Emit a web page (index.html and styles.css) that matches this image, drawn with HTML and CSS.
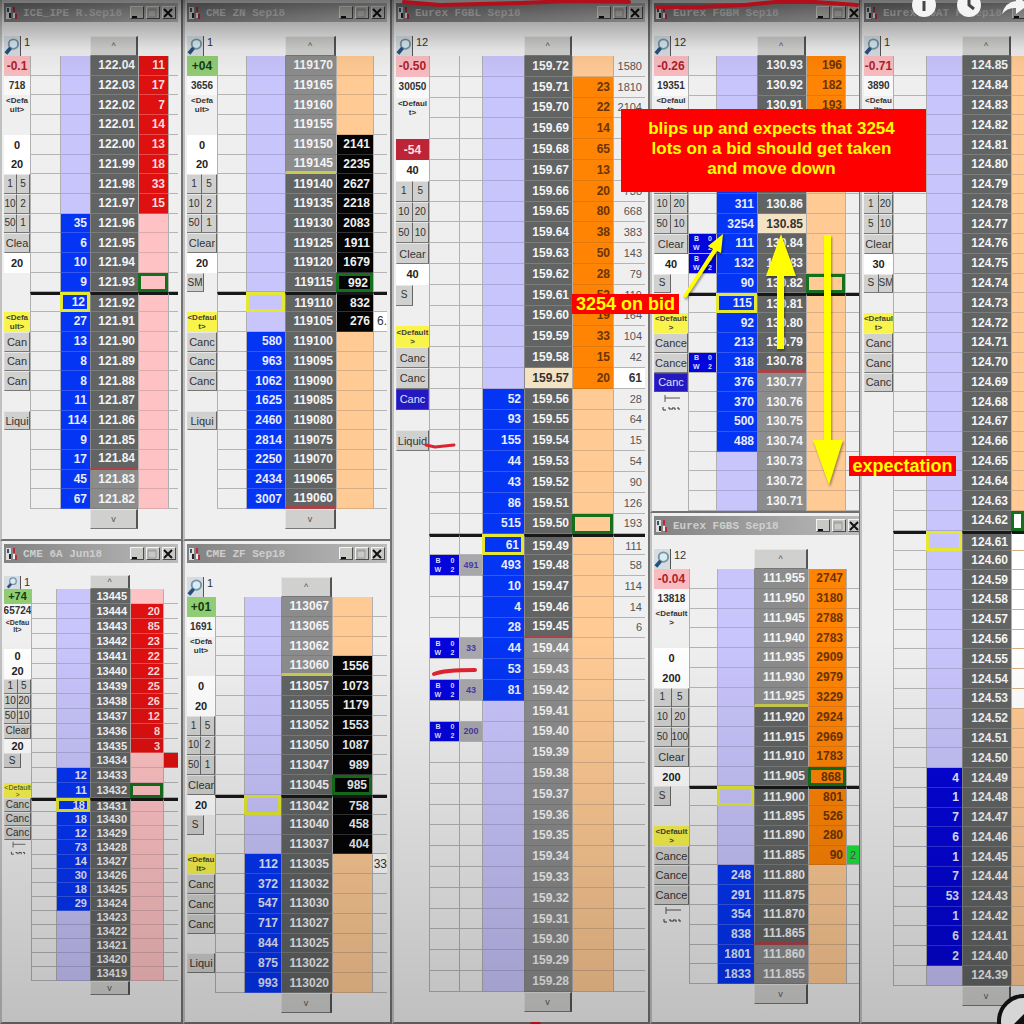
FILE: index.html
```html
<!DOCTYPE html>
<html lang="en">
<head>
    <meta charset="UTF-8">
    <meta name="viewport" content="width=device-width, initial-scale=1.0">
    <title>Price Ladders</title>
    <link rel="stylesheet" href="styles.css">
</head>
<body>

    <main class="desktop">
        <div class="column" id="col-1"></div>
        <div class="column" id="col-2"></div>
        <div class="column column-single" id="col-3"></div>
        <div class="column column-half" id="col-4"></div>
        <div class="column column-single" id="col-5"></div>
    </main>

    <div class="shade"></div>

    <!-- Marker pen and arrows -->
    <svg class="drawings" width="1024" height="1024" viewBox="0 0 1024 1024" xmlns="http://www.w3.org/2000/svg">
        <g fill="none" stroke="#b0101c" stroke-width="4" stroke-linecap="round" stroke-linejoin="round">
            <path d="M404 2 L440 5 L520 3 L570 1 L629 2"/>
            <path d="M657 7 L700 7 L745 5 L775 2 L815 2 L857 5"/>
            <path d="M426 445 L435 447 L454 445" stroke="#dc2430" stroke-width="3"/>
            <path d="M434 674 Q444 670 475 670" stroke="#dc2430"/>
            <path d="M532 1024 H539"/>
        </g>
        <g class="arrows">
            <path d="M683 296 L713 249 L708 246 L723 234 L721 253 L717 251 L686 298 Z"/>
            <path d="M777 349 V276 H766 L781 234 L796 276 H784 V349 Z"/>
            <path d="M824 235 H831 V440 H843 L829 485 L813 440 H824 Z"/>
        </g>
        <circle cx="1024" cy="1021" r="25" fill="#d6d6d6" stroke="#111" stroke-width="4"/>
        <path d="M1014 1024 L1024 1014 V1024 Z" fill="#111"/>
    </svg>

    <p class="callout callout-main">blips up and expects that 3254<br>lots on a bid should get taken<br>and move down</p>
    <p class="callout callout-bid">3254 on bid</p>
    <p class="callout callout-target">expectation</p>

    <div class="player-buttons">
        <button type="button" aria-label="Info">
            <svg viewBox="0 0 24 24"><circle cx="12" cy="12" r="12" fill="#f4f4f4"/><path d="M12 8 V18" stroke="#444" stroke-width="3"/></svg>
        </button>
        <button type="button" aria-label="Watch later">
            <svg viewBox="0 0 24 24"><circle cx="12" cy="12" r="12" fill="#f4f4f4"/><path d="M12 5 V12 L17 16" fill="none" stroke="#444" stroke-width="3"/></svg>
        </button>
        <button type="button" aria-label="Share">
            <svg viewBox="0 0 24 24"><path d="M0 21 Q3 9 14 8 V2 L26 12 L14 21 V15 Q6 14 0 21 Z" fill="#f4f4f4"/></svg>
        </button>
    </div>

    <script src="ladders.js"></script>
</body>
</html>
```

FILE: styles.css
```css
* {
    box-sizing: border-box;
}
body {
    margin: 0;
    overflow: hidden;
    font-family: "Liberation Sans", Arial, sans-serif;
    font-size: 12px;
    background: #e4e4e4;
}
button, input {
    font: inherit;
    margin: 0;
    padding: 0;
    min-width: 0;
    border-radius: 0;
}

/* --- Layout --- */
.desktop {
    display: grid;
    grid-template-columns: 183fr 209fr 258fr 210fr 164fr;
    height: 100vh;
    min-height: 960px;
}
.column {
    display: grid;
    grid-template-rows: 541fr 483fr;
    min-width: 0;
}
.column-single {
    grid-template-rows: 1fr;
}
.column-half {
    grid-template-rows: 513fr 511fr;
}

/* --- Window --- */
.window {
    display: flex;
    flex-direction: column;
    min-width: 0;
    min-height: 0;
    padding: 3px 3px 0 2px;
    border: 2px solid #727272;
    border-top: 0;
    border-left-color: #c0c0c0;
    background: #efefef;
    overflow: hidden;
}
.window-flush {
    padding-right: 0;
    border-right-width: 1px;
}
.window-cut {
    padding-right: 0;
    border-right: 0;
}
.title-bar {
    display: flex;
    align-items: center;
    height: 19px;
    flex: none;
    padding: 0 2px;
    background: linear-gradient(to right, #828282, #bcbcbc);
}
/* these two run past the edge of the view */
.window-flush .title-bar {
    width: 210px;
}
.window-cut .title-bar {
    width: 196px;
}
.title-bar svg {
    width: 12px;
    height: 14px;
    flex: none;
    margin-right: 5px;
}
.title-bar h2 {
    flex: 1;
    min-width: 0;
    margin: 0;
    overflow: hidden;
    white-space: nowrap;
    font: bold 11px "Liberation Mono", monospace;
    color: #cecece;
}
.title-bar button {
    width: 14px;
    height: 13px;
    flex: none;
    margin-left: 2px;
    border: 1px solid;
    border-color: #f4f4f4 #4c4c4c #4c4c4c #f4f4f4;
    background: #c8c8c4;
}
.title-bar button svg {
    display: block;
    width: 10px;
    height: 10px;
    margin: 0;
}
.toolbar, .footer {
    display: grid;
    flex: none;
}
.toolbar {
    height: 34px;
    align-items: end;
}
.toolbar-short {
    height: 26px;
}
.zoom {
    display: flex;
    gap: 3px;
    white-space: nowrap;
    font-size: 11px;
    color: #333;
}
.zoom button {
    width: 17px;
    height: 20px;
    flex: none;
    border: 0;
    border-right: 1px solid #555;
    background: #d5dde2;
}
.toolbar-short .zoom button {
    height: 13px;
}
.zoom svg {
    display: block;
    width: 100%;
    height: 100%;
}
.scroll {
    height: 20px;
    border: 1px solid;
    border-color: #e4e4e4 #555 #777 #e4e4e4;
    border-right-width: 2px;
    background: #d0d0ce;
    color: #555;
    font-size: 9px;
    line-height: 12px;
}
.toolbar-short .scroll, .ladder-small + .footer .scroll {
    height: 14px;
}

/* --- Ladder --- */
.ladder {
    display: flex;
    flex: 1;
    min-height: 0;
}
.ladder tbody {
    display: flex;
    flex-direction: column;
    flex: 1;
    min-width: 0;
}
.ladder tr {
    display: grid;
    flex: 1 1 0;
    min-height: 0;
}
.ladder td {
    display: flex;
    align-items: center;
    justify-content: flex-end;
    min-width: 0;
    min-height: 0;
    padding: 0 3px 0 0;
    overflow: hidden;
    white-space: nowrap;
    font-weight: bold;
    line-height: 14px;
    border-bottom: 1px solid #b4b4b4;
    border-left: 1px solid #b0b0b0;
}
.ladder-small td {
    font-size: 11px;
    line-height: 12px;
}
.ladder .bid { background: #c8c4fc; border-bottom-color: #aaa8d8; }
.ladder .ask { background: #ffca94; border-bottom-color: #d8ae84; }
.ladder .ask-pink { background: #ffc2c4; border-bottom-color: #dcaaac; }
.ladder .ask-white { background: #fff; }
.ladder .price { background: #626464; color: #f4f4f4; border-bottom-color: #7c7e7e; border-left-color: #888; }
.ladder .price-light { background: #8c8c8c; }
.ladder .price-last { background: #f4e2c4; color: #333; }
.ladder .high { border-bottom: 3px solid #c8cc50; }
.ladder .low { border-bottom: 3px solid #a84448; }
.ladder .fill-blue { background: #0434f4; color: #e8ecff; border-bottom-color: #3458f0; }
.ladder .fill-navy { background: #0404d8; color: #e8ecff; border-bottom-color: #3434e0; }
.ladder .fill-red { background: #de1010; color: #ffd8d8; border-bottom-color: #e84c4c; }
.ladder .fill-black { background: #040404; color: #f0f0f0; border-bottom-color: #333; }
.ladder .fill-orange { background: #ff8404; color: #6a3404; border-bottom-color: #e07810; }
.ladder .fill-green { background: #1ce43c; color: #234; }
.ladder .mid td + td { border-top: 3px solid #181818; }
.ladder .mid td.best-bid, .ladder td.best-bid {
    border: 3px solid #e4e834;
    padding-right: 2px;
}
.ladder td.best-ask {
    border: 3px solid #14701c;
    padding-right: 2px;
}
.ladder .volume {
    font-weight: normal;
    font-size: 11px;
    color: #555;
}
.ladder .volume-last {
    background: #fff;
    font-weight: bold;
    font-size: 12px;
    color: #333;
}
.ladder .volume-cut {
    background: #fff;
    font-size: 12px;
    color: #333;
    padding: 0;
}
.ladder .order {
    justify-content: space-around;
    padding: 0;
    background: #0404dc;
    color: #dcdcff;
    font-size: 7px;
    line-height: 9px;
    text-align: center;
    white-space: pre;
}
.ladder .order-size {
    justify-content: center;
    padding: 0;
    background: #a8a8ac;
    color: #4838a8;
    font-size: 9px;
}

/* --- Side controls, first cell of each row --- */
.ladder .side {
    justify-content: center;
    padding: 0;
    border: 0;
    color: #333;
}
.side input {
    width: 100%;
    height: 100%;
    border: 0;
    background: #fff;
    color: #222;
    text-align: center;
    font-size: 11px;
    font-weight: bold;
}
.side button {
    flex: 1;
    height: 100%;
    padding: 0;
    overflow: hidden;
    border: 1px solid;
    border-color: #e8e8e8 #666 #777 #d8d8d8;
    background: #d0d0ce;
    color: #333;
    font-size: 11px;
    font-weight: normal;
    line-height: 12px;
}
.side .pair {
    border-left: 0;
    font-size: 10px;
}
.ladder-small .side button {
    font-size: 10px;
}
.side .narrow {
    flex: none;
    width: 17px;
    margin-right: auto;
    border-left: 0;
    font-size: 10px;
}
.side .sent {
    background: #2418c0;
    border-color: #4840d0;
    color: #e0e0ff;
}
.ladder .up { background: #90cc74; color: #143c14; }
.ladder .down { background: #f8bcc0; color: #b01c2c; }
.ladder .position { background: #bc2438; color: #ffe0e0; }
.ladder .total { background: #f8f8f8; font-size: 10px; }
.ladder .account, .ladder .account-set {
    font-size: 8px;
    line-height: 9px;
    text-align: center;
    white-space: pre;
}
.ladder-small .account, .ladder-small .account-set {
    font-size: 7px;
    line-height: 7px;
}
.ladder-small .account-set {
    font-weight: normal;
}
.ladder .account-set { background: #f8f44c; color: #443; }
.side svg {
    width: 18px;
    height: 17px;
}
.ladder-small .side svg {
    height: 14px;
}

/* --- Overlays --- */
.shade {
    position: absolute;
    inset: 0;
    pointer-events: none;
    background: linear-gradient(to bottom, rgba(0, 0, 0, .52), rgba(0, 0, 0, .35) 15px, rgba(0, 0, 0, .05) 50px, transparent 80px, transparent 640px, rgba(0, 0, 0, .2) 1024px);
}
.drawings {
    position: absolute;
    top: 0;
    left: 0;
    pointer-events: none;
}
.arrows {
    fill: #ffff00;
    filter: drop-shadow(1px 2px 1px rgba(0, 0, 0, .4));
}
.callout {
    position: absolute;
    margin: 0;
    background: #ff0000;
    color: #ffff00;
    font-size: 18px;
    font-weight: bold;
    line-height: 20px;
    text-align: center;
    white-space: nowrap;
}
.callout-main {
    top: 109px;
    left: 621px;
    width: 305px;
    padding: 10px 4px 13px 0;
    font-size: 17px;
}
.callout-bid {
    top: 294px;
    left: 572px;
    width: 107px;
}
.callout-target {
    top: 456px;
    left: 849px;
    width: 107px;
}
.player-buttons {
    position: absolute;
    top: -7px;
    right: -2px;
    display: flex;
    gap: 21px;
}
.player-buttons button {
    width: 24px;
    height: 24px;
    border: 0;
    background: none;
}
.player-buttons svg {
    display: block;
}
```

FILE: ladders.js
```js
// One entry per window. Row numbers start at 1, at the top of the ladder.
const windows = [
    {
        column: 'col-1', title: 'ICE_IPE R.Sep18', count: '1', footer: 30,
        cols: { side: 26, orders: 30, bid: 30, price: 48, ask: 30, volume: 10 },
        prices: { first: 122.04, step: 0.01, rows: 23, decimals: 2 },
        light: [22, 23], low: 21, mid: 12, bestAsk: 12, bestBid: 13, askClass: 'ask-pink',
        bids: { from: 9, fill: 'fill-blue', values: [35, 6, 10, 9, 12, 27, 13, 8, 8, 11, 114, 9, 17, 45, 67] },
        asks: { from: 1, fill: 'fill-red', values: [11, 17, 7, 14, 13, 18, 33, 15] },
        side: {
            1: ['down', '-0.1'], 2: ['total', '718'], 3: ['account', '<Defa\nult>'], 5: ['input', '0'], 6: ['input', '20'],
            7: ['buttons', '1', '5'], 8: ['buttons', '10', '2'], 9: ['buttons', '50', '1'], 10: ['buttons', 'Clea'], 11: ['input', '20'],
            14: ['account-set', '<Defa\nult>'], 15: ['buttons', 'Can'], 16: ['buttons', 'Can'], 17: ['buttons', 'Can'], 19: ['buttons', 'Liqui']
        }
    },
    {
        column: 'col-1', title: 'CME 6A Jun18', count: '1', footer: 41, small: true,
        cols: { side: 27, orders: 25, bid: 34, price: 40, ask: 33, volume: 15 },
        prices: { first: 13445, step: 1, rows: 27, decimals: 0 },
        stretch: [149, 140], mid: 14, bestAsk: 14, bestBid: 15, askClass: 'ask-pink',
        bids: { from: 13, fill: 'fill-blue', values: [12, 11, 18, 18, 12, 73, 14, 30, 18, 29] },
        asks: { from: 2, fill: 'fill-red', values: [20, 85, 23, 22, 22, 25, 26, 12, 8, 3] },
        volumes: { 12: ['fill-red', ''] },
        side: {
            1: ['up', '+74'], 2: ['total', '65724'], 3: ['account', '<Defau\nlt>'], 5: ['input', '0'], 6: ['input', '20'],
            7: ['buttons', '1', '5'], 8: ['buttons', '10', '20'], 9: ['buttons', '50', '10'], 10: ['buttons', 'Clear'], 11: ['input', '20'],
            12: ['narrow', 'S'], 14: ['account-set', '<Default\n>'], 15: ['buttons', 'Canc'], 16: ['buttons', 'Canc'], 17: ['buttons', 'Canc'], 18: ['lines']
        }
    },
    {
        column: 'col-2', title: 'CME ZN Sep18', count: '1', footer: 30,
        cols: { side: 30, orders: 29, bid: 39, price: 51, ask: 37, volume: 14 },
        prices: { first: 119170, step: 5, rows: 23, decimals: 0 },
        light: [1, 6], high: 6, low: 23, mid: 12, bestAsk: 12, bestBid: 13,
        bids: { from: 15, fill: 'fill-blue', values: [580, 963, 1062, 1625, 2460, 2814, 2250, 2434, 3007] },
        asks: { from: 5, fill: 'fill-black', values: [2141, 2235, 2627, 2218, 2083, 1911, 1679, 992, 832, 276] },
        volumes: { 14: ['volume-cut', '6.'] },
        side: {
            1: ['up', '+04'], 2: ['total', '3656'], 3: ['account', '<Defa\nult>'], 5: ['input', '0'], 6: ['input', '20'],
            7: ['buttons', '1', '5'], 8: ['buttons', '10', '2'], 9: ['buttons', '50', '1'], 10: ['buttons', 'Clear'], 11: ['input', '20'],
            12: ['narrow', 'SM'], 14: ['account-set', '<Defaul\nt>'], 15: ['buttons', 'Canc'], 16: ['buttons', 'Canc'], 17: ['buttons', 'Canc'], 19: ['buttons', 'Liqui']
        }
    },
    {
        column: 'col-2', title: 'CME ZF Sep18', count: '1', footer: 29,
        cols: { side: 28, orders: 29, bid: 37, price: 51, ask: 40, volume: 15 },
        labels: [113067, 113065, 113062, 113060, 113057, 113055, 113052, 113050, 113047, 113045,
            113042, 113040, 113037, 113035, 113032, 113030, 113027, 113025, 113022, 113020],
        light: [1, 4], high: 4, mid: 10, bestAsk: 10, bestBid: 11,
        bids: { from: 14, fill: 'fill-blue', values: [112, 372, 547, 717, 844, 875, 993] },
        asks: { from: 4, fill: 'fill-black', values: [1556, 1073, 1179, 1553, 1087, 989, 985, 758, 458, 404] },
        volumes: { 14: ['volume-cut', '33'] },
        side: {
            1: ['up', '+01'], 2: ['total', '1691'], 3: ['account', '<Defa\nult>'], 5: ['input', '0'], 6: ['input', '20'],
            7: ['buttons', '1', '5'], 8: ['buttons', '10', '2'], 9: ['buttons', '50', '1'], 10: ['buttons', 'Clear'], 11: ['input', '20'],
            12: ['narrow', 'S'], 14: ['account-set', '<Defau\nlt>'], 15: ['buttons', 'Canc'], 16: ['buttons', 'Canc'], 17: ['buttons', 'Canc'], 19: ['buttons', 'Liqui']
        }
    },
    {
        column: 'col-3', title: 'Eurex FGBL Sep18', count: '12', footer: 30,
        cols: { side: 33, orders: 30, size: 23, bid: 42, price: 48, ask: 41, volume: 32 },
        prices: { first: 159.72, step: 0.01, rows: 45, decimals: 2 },
        light: [29, 45], low: 28, last: 16, mid: 23, bestAsk: 23, bestBid: 24,
        bids: { from: 17, fill: 'fill-blue', values: [52, 93, 155, 44, 43, 86, 515, 61, 493, 10, 4, 28, 44, 53, 81] },
        asks: { from: 2, fill: 'fill-orange', values: [23, 22, 14, 65, 13, 20, 80, 38, 50, 28, 52, 19, 33, 15, 20] },
        orders: { 25: '491', 29: '33', 31: '43', 33: '200' },
        volumes: {
            1: ['', 1580], 2: ['', 1810], 3: ['', 2104], 7: ['', 738], 8: ['', 668], 9: ['', 383], 10: ['', 143], 11: ['', 79], 12: ['', 119],
            13: ['', 164], 14: ['', 104], 15: ['', 42], 16: ['volume-last', 61], 17: ['', 28], 18: ['', 64], 19: ['', 15], 20: ['', 54],
            21: ['', 90], 22: ['', 126], 23: ['', 193], 24: ['', 111], 25: ['', 58], 26: ['', 114], 27: ['', 14], 28: ['', 6]
        },
        side: {
            1: ['down', '-0.50'], 2: ['total', '30050'], 3: ['account', '<Defaul\nt>'], 5: ['position', '-54'], 6: ['input', '40'],
            7: ['buttons', '1', '5'], 8: ['buttons', '10', '20'], 9: ['buttons', '50', '10'], 10: ['buttons', 'Clear'], 11: ['input', '40'],
            12: ['narrow', 'S'], 14: ['account-set', '<Default\n>'], 15: ['buttons', 'Canc'], 16: ['buttons', 'Canc'], 17: ['sent', 'Canc'], 19: ['buttons', 'Liquid']
        }
    },
    {
        column: 'col-4', title: 'Eurex FGBM Sep18', count: '12', footer: 0, className: 'window-flush',
        cols: { side: 34, orders: 28, bid: 41, price: 49, ask: 39, volume: 14 },
        prices: { first: 130.93, step: 0.01, rows: 23, decimals: 2 },
        light: [17, 23], low: 16, last: 9, mid: 12, bestAsk: 12, bestBid: 13,
        bids: { from: 7, fill: 'fill-blue', values: ['', 311, 3254, 111, 132, 90, 115, 92, 213, 318, 376, 370, 500, 488] },
        asks: { from: 1, fill: 'fill-orange', values: [196, 182, 193] },
        orders: { 10: '', 11: '', 16: '' },
        side: {
            1: ['down', '-0.26'], 2: ['total', '19351'], 3: ['account', '<Defaul\nt>'], 7: ['buttons', '1', '5'],
            8: ['buttons', '10', '20'], 9: ['buttons', '50', '10'], 10: ['buttons', 'Clear'], 11: ['input', '40'],
            12: ['narrow', 'S'], 14: ['account-set', '<Default\n>'], 15: ['buttons', 'Cance'], 16: ['buttons', 'Cance'], 17: ['sent', 'Canc'], 18: ['lines']
        }
    },
    {
        column: 'col-4', title: 'Eurex FGBS Sep18', count: '12', footer: 38, className: 'window-flush',
        cols: { side: 35, orders: 28, bid: 37, price: 54, ask: 38, volume: 13 },
        prices: { first: 111.955, step: 0.005, rows: 21, decimals: 3 },
        light: [1, 7], lightEnd: 20, high: 7, low: 19, mid: 11, bestAsk: 11, bestBid: 12,
        bids: { from: 16, fill: 'fill-blue', values: [248, 291, 354, 838, 1801, 1833] },
        asks: { from: 1, fill: 'fill-orange', values: [2747, 3180, 2788, 2783, 2909, 2979, 3229, 2924, 2969, 1783, 868, 801, 526, 280, 90] },
        volumes: { 15: ['fill-green', '2'] },
        side: {
            1: ['down', '-0.04'], 2: ['total', '13818'], 3: ['account', '<Default\n>'], 5: ['input', '0'], 6: ['input', '200'],
            7: ['buttons', '1', '5'], 8: ['buttons', '10', '20'], 9: ['buttons', '50', '100'], 10: ['buttons', 'Clear'], 11: ['input', '200'],
            12: ['narrow', 'S'], 14: ['account-set', '<Default\n>'], 15: ['buttons', 'Cance'], 16: ['buttons', 'Cance'], 17: ['buttons', 'Cance'], 18: ['lines']
        }
    },
    {
        column: 'col-5', title: 'Eurex FOAT P Sep18', count: '1', footer: 36, className: 'window-cut',
        cols: { side: 29, orders: 33, bid: 36, price: 49, ask: 13 },
        prices: { first: 124.85, step: 0.01, rows: 47, decimals: 2 },
        mid: 24, bestAsk: 24, bestBid: 25, white: [24, 33],
        bids: { from: 37, fill: 'fill-navy', values: [4, 1, 7, 6, 1, 7, 53, 1, 6, 2] },
        asks: { from: 1, fill: '', values: [] },
        side: {
            1: ['down', '-0.71'], 2: ['total', '3890'], 3: ['account', '<Defau\nlt>'], 7: ['buttons', '1', '5'],
            8: ['buttons', '1', '20'], 9: ['buttons', '5', '10'], 10: ['buttons', 'Clear'], 11: ['input', '30'],
            12: ['buttons', 'S', 'SM'], 14: ['account-set', '<Defaul\nt>'], 15: ['buttons', 'Canc'], 16: ['buttons', 'Canc'], 17: ['buttons', 'Canc']
        }
    }
];

const logo = '<svg viewBox="0 0 12 14"><path d="M0 1H5V13H0Z" fill="#ddd"/><path d="M1 2H3V6H1Z" fill="#356"/><path d="M3 7H5V12H3Z" fill="#222"/><path d="M7 1H9V6H7ZM9 8H11V13H9Z" fill="#c02838"/><path d="M7 7H9V12H7Z" fill="#eee"/></svg>';
const lens = '<svg viewBox="0 0 17 20"><circle cx="10" cy="8" r="5" fill="#d8ecf4" stroke="#7894a4" stroke-width="2"/><path d="M7 12 L2 18" stroke="#28507c" stroke-width="4"/></svg>';
const lines = '<svg viewBox="0 0 18 17"><path d="M3 1V8M3 4H18" stroke="#555" fill="none"/><path d="M1 13V16H4M6 14H8V16M10 16V14H13V16M15 14H17V16" stroke="#333" fill="none"/></svg>';
const minimise = '<svg viewBox="0 0 10 10"><path d="M1 9H6" stroke="#111" stroke-width="2"/></svg>';
const maximise = '<svg viewBox="0 0 10 10"><path d="M1 1H9V9H1ZM1 2H9" stroke="#999" fill="none"/></svg>';
const close = '<svg viewBox="0 0 10 10"><path d="M1 1L9 9M9 1L1 9" stroke="#111" stroke-width="2"/></svg>';

function escapeHtml(text) {
    return String(text).replace(/</g, '&lt;').replace(/>/g, '&gt;');
}

function inRange(row, range) {
    return range && row >= range[0] && row <= range[1];
}

function valueAt(list, row) {
    return list.values[row - list.from];
}

function sideCell(item) {
    if (!item) return '<td class="side"></td>';
    const [type, ...text] = item;
    if (type === 'input') return `<td class="side"><input type="text" aria-label="Quantity" value="${text[0]}"></td>`;
    if (type === 'lines') return `<td class="side">${lines}</td>`;
    if (type === 'buttons') {
        const name = text.length > 1 ? 'pair' : '';
        return `<td class="side">${text.map(t => `<button type="button" class="${name}">${t}</button>`).join('')}</td>`;
    }
    if (type === 'narrow' || type === 'sent') return `<td class="side"><button type="button" class="${type}">${text[0]}</button></td>`;
    return `<td class="side ${type}">${escapeHtml(text[0])}</td>`;
}

function ladderRow(win, row, label, columns) {
    const bid = valueAt(win.bids, row);
    const ask = valueAt(win.asks, row);
    const isOrder = win.orders && row in win.orders;
    const cells = {
        side: () => sideCell(win.side[row]),
        orders: () => isOrder ? '<td class="order"><span>B\nW</span><span>0\n2</span></td>' : '<td></td>',
        size: () => isOrder ? `<td class="order-size">${win.orders[row]}</td>` : '<td></td>',
        bid: () => `<td class="bid ${bid === undefined ? '' : win.bids.fill} ${row === win.bestBid ? 'best-bid' : ''}">${bid ?? ''}</td>`,
        price: () => {
            const names = ['price'];
            if (inRange(row, win.light) || row >= win.lightEnd) names.push('price-light');
            if (row === win.last) names.push('price-last');
            if (row === win.high) names.push('high');
            if (row === win.low) names.push('low');
            return `<td class="${names.join(' ')}">${label}</td>`;
        },
        ask: () => `<td class="ask ${win.askClass || ''} ${inRange(row, win.white) ? 'ask-white' : ''} ${ask === undefined ? '' : win.asks.fill} ${row === win.bestAsk ? 'best-ask' : ''}">${ask ?? ''}</td>`,
        volume: () => {
            const [name, text] = (win.volumes && win.volumes[row]) || ['', ''];
            return `<td class="volume ${name}">${text}</td>`;
        }
    };
    const grow = win.stretch ? `;flex-grow:${row <= win.mid ? win.stretch[0] : win.stretch[1]}` : '';
    return `<tr class="${row === win.mid + 1 ? 'mid' : ''}" style="grid-template-columns:${columns}${grow}">` +
        Object.keys(win.cols).map(name => cells[name]()).join('') + '</tr>';
}

function renderWindow(win) {
    const names = Object.keys(win.cols);
    const columns = names.map(name => win.cols[name] + 'fr').join(' ');
    const priceColumn = names.indexOf('price') + 1;
    const labels = win.labels || Array.from({ length: win.prices.rows },
        (_, i) => (win.prices.first - i * win.prices.step).toFixed(win.prices.decimals));

    const section = document.createElement('section');
    section.className = 'window ' + (win.className || '');
    section.innerHTML = `
        <header class="title-bar">${logo}<h2>${win.title}</h2>
            <button type="button" aria-label="Minimise">${minimise}</button>
            <button type="button" aria-label="Maximise">${maximise}</button>
            <button type="button" aria-label="Close">${close}</button>
        </header>
        <div class="toolbar ${win.small ? 'toolbar-short' : ''}" style="grid-template-columns:${columns}">
            <div class="zoom"><button type="button" aria-label="Zoom">${lens}</button><span>${win.count}</span></div>
            <button type="button" class="scroll" aria-label="Scroll up" style="grid-column:${priceColumn}">^</button>
        </div>
        <table class="ladder ${win.small ? 'ladder-small' : ''}"><tbody>
            ${labels.map((label, i) => ladderRow(win, i + 1, label, columns)).join('')}
        </tbody></table>
        <div class="footer" style="grid-template-columns:${columns};height:${win.footer}px">
            ${win.footer ? `<button type="button" class="scroll" aria-label="Scroll down" style="grid-column:${priceColumn}">v</button>` : ''}
        </div>`;
    document.getElementById(win.column).appendChild(section);
}

windows.forEach(renderWindow);
```
